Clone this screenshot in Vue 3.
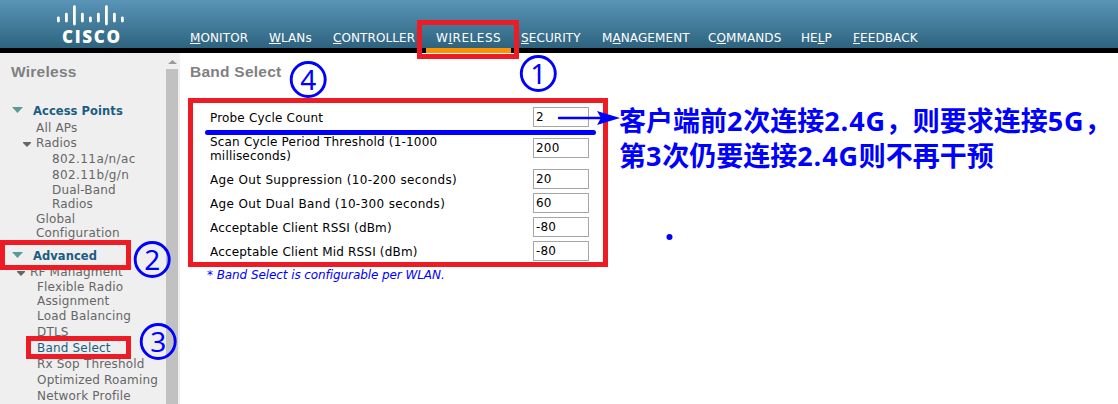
<script setup>
const nav = [
  ['', 'M', 'ONITOR', 59], ['', 'W', 'LANs', 44], ['', 'C', 'ONTROLLER', 83], ['W', 'I', 'RELESS', 65],
  ['', 'S', 'ECURITY', 61], ['M', 'A', 'NAGEMENT', 86], ['C', 'O', 'MMANDS', 73], ['HE', 'L', 'P', 32], ['', 'F', 'EEDBACK', 65],
].map(([before, key, after, width]) => ({ before, key, after, width }))

const menu = [
  { text: 'Access Points', kind: 'head', h: 17, x: 33 },
  { text: 'All APs', h: 15, x: 36 },
  { text: 'Radios', kind: 'sub', h: 16, x: 36 },
  { text: '802.11a/n/ac', kind: 'radio', h: 16, x: 52 },
  { text: '802.11b/g/n', kind: 'radio', h: 15, x: 52 },
  { text: 'Dual-Band', h: 14, x: 52 },
  { text: 'Radios', h: 15, x: 52 },
  { text: 'Global', h: 14, x: 36 },
  { text: 'Configuration', h: 23, x: 36 },
  { text: 'Advanced', kind: 'head', h: 16, x: 33 },
  { text: 'RF Managment', kind: 'sub', h: 15, x: 30 },
  { text: 'Flexible Radio', h: 14, x: 37 },
  { text: 'Assignment', h: 15, x: 37 },
  { text: 'Load Balancing', h: 16, x: 37 },
  { text: 'DTLS', h: 16, x: 37 },
  { text: 'Band Select', kind: 'active', h: 16, x: 37 },
  { text: 'Rx Sop Threshold', h: 16, x: 37 },
  { text: 'Optimized Roaming', h: 16, x: 37 },
  { text: 'Network Profile', h: 16, x: 37 },
]

const fields = [
  { label: 'Probe Cycle Count', value: '2' },
  { label: 'Scan Cycle Period Threshold (1-1000 milliseconds)', value: '200', tall: true },
  { label: 'Age Out Suppression (10-200 seconds)', value: '20', wide: true },
  { label: 'Age Out Dual Band (10-300 seconds)', value: '60', wide: true },
  { label: 'Acceptable Client RSSI (dBm)', value: '-80' },
  { label: 'Acceptable Client Mid RSSI (dBm)', value: '-80' },
]

const bars = [
  [58.4, 16.5, 22.5], [66.4, 12.7, 22.5], [74.4, 5.2, 25.5], [82.4, 12.7, 22.5], [90.4, 16.5, 22.5],
  [98.4, 12.7, 22.5], [106.4, 5.2, 25.5], [114.4, 12.7, 22.5], [122.4, 16.5, 22.5],
]
const steps = [
  { n: 1, x: 538.3, y: 73.5 }, { n: 2, x: 152.2, y: 259.5 },
  { n: 3, x: 158.2, y: 341.5 }, { n: 4, x: 308.2, y: 79.5 },
]
</script>

<template>
  <div class="page">
    <header class="top">
      <svg class="logo" width="190" height="48" viewBox="0 0 190 48">
        <line v-for="b in bars" :key="b[0]" :x1="b[0]" :x2="b[0]" :y1="b[1] + 1.4" :y2="b[2] - 1.4" />
        <text x="62" y="43" textLength="58" lengthAdjust="spacing">CISCO</text>
      </svg>
      <nav class="nav">
        <a v-for="n in nav" :key="n.after" :style="{ width: n.width + 'px' }">{{ n.before }}<u>{{ n.key }}</u>{{ n.after }}</a>
      </nav>
    </header>
    <div class="strip"><i class="tab"></i></div>
    <div class="body">
      <aside class="side">
        <div class="menu">
          <h2>Wireless</h2>
          <div v-for="(m, i) in menu" :key="i" class="item" :class="m.kind" :style="{ height: m.h + 'px', paddingLeft: m.x + 'px' }">
            <svg v-if="m.kind === 'head'" class="tri" width="11" height="6"><path d="M0 0H11L5.5 6Z" /></svg>
            <svg v-if="m.kind === 'sub'" class="tri" width="8" height="5"><path d="M0 0H8V1L4 5L0 1Z" /></svg>
            <span>{{ m.text }}</span>
          </div>
        </div>
        <div class="scroll">
          <svg width="9" height="4"><path d="M0 4L4.5 0L9 4Z" fill="#9b9b9b" /></svg>
          <div class="thumb"></div>
        </div>
      </aside>
      <main class="main">
        <h2>Band Select</h2>
        <div class="form">
          <div v-for="f in fields" :key="f.label" class="row" :class="{ tall: f.tall, wide: f.wide }">
            <label>{{ f.label }}</label>
            <span class="box">{{ f.value }}</span>
          </div>
        </div>
        <p class="note">* Band Select is configurable per WLAN.</p>
      </main>
    </div>

    <svg class="marks" width="1118" height="404" viewBox="0 0 1118 404">
      <g fill="none" stroke="#ed1c24" stroke-width="5">
        <rect x="419.5" y="22.5" width="97" height="34" />
        <rect x="190.5" y="100.5" width="415" height="164" />
        <rect x="2.5" y="242.5" width="126" height="25" />
        <rect x="28.5" y="338.5" width="100" height="18" />
      </g>
      <path d="M207.5 132.5H593.5" stroke="#00f" stroke-width="5" stroke-linecap="round" />
      <path d="M559 118H602" stroke="#00f" stroke-width="2.4" stroke-linecap="round" />
      <path d="M597 111L620 118L597 125L601 118Z" fill="#00f" />
      <circle cx="669.5" cy="237" r="3" fill="#00f" />
      <g v-for="s in steps" :key="s.n">
        <circle :cx="s.x" :cy="s.y" r="17" fill="none" stroke="#00f" stroke-width="2.9" />
        <text class="digit" :x="s.x" :y="s.y + 10.5" text-anchor="middle">{{ s.n }}</text>
      </g>
    </svg>
    <div class="remark">
      <div>客户端前<b>2</b>次连接<b>2.4G</b>，则要求连接<b>5G</b>，</div>
      <div>第<b>3</b>次仍要连接<b>2.4G</b>则不再干预</div>
    </div>
  </div>
</template>

<style>
body { background: #fff; overflow: hidden; }
</style>
<style scoped>
.page { position: relative; width: 1118px; height: 404px; overflow: hidden; font-family: "DejaVu Sans", sans-serif; font-size: 12px; letter-spacing: 0.18px; }
.top { height: 48px; display: flex; background: linear-gradient(#5a95b7, #2d637f); }
.logo { flex: none; letter-spacing: 0; }
.logo line { stroke: #fff; stroke-width: 2.8; stroke-linecap: round; }
.logo text { fill: #fff; font: 800 17px "Open Sans", sans-serif; }
.nav { display: flex; gap: 20px; padding-top: 30px; color: #fff; font-size: 12px; line-height: 16px; letter-spacing: 0.1px; }
.nav a { white-space: nowrap; }
.nav a:nth-child(4) { letter-spacing: 0.55px; }
.nav u { text-underline-offset: 1px; text-decoration-thickness: 1px; }
.strip { height: 5px; background: #000; }
.tab { display: block; width: 85px; height: 5px; margin-left: 426px; background: #ff9000; }
.body { display: flex; height: 351px; }
.side { width: 180px; background: #efefef; display: flex; overflow: hidden; }
.menu { width: 166px; flex: none; }
h2 { margin: 0; font: bold 15.5px/20px "Liberation Sans", Arial, sans-serif; letter-spacing: 0.25px; color: #808080; }
.menu h2 { padding: 9px 0 0 11px; height: 22px; }
.item { box-sizing: border-box; position: relative; color: #666; line-height: 14px; white-space: nowrap; }
.menu h2 + .item { margin-top: 20px; }
.head { color: #1b5c82; font-weight: bold; font-size: 11.5px; letter-spacing: 0.08px; }
.radio { letter-spacing: 0.4px; }
.active { color: #1b5c82; }
.tri { position: absolute; left: 12px; top: 3px; fill: #5c9a98; }
.sub .tri { left: auto; margin-left: -13px; top: 6px; fill: #666; }
.scroll { width: 12px; display: flex; flex-direction: column; align-items: center; padding-top: 7px; }
.scroll svg { flex: none; }
.thumb { width: 12px; flex: 1; margin-top: 5px; background: #c1c1c1; }
.main { flex: 1; }
.main h2 { padding: 9px 0 0 10px; }
.form { padding: 23px 0 0 30px; color: #000; }
.row { display: flex; align-items: center; height: 24px; }
.row.tall { height: 38px; }
.row label { width: 323px; line-height: 14px; padding: 2px 70px 0 0; box-sizing: border-box; }
.row.wide label { letter-spacing: 0.35px; }
.box { box-sizing: border-box; width: 56px; height: 20px; border: 1px solid #a6a6a6; padding-left: 2px; line-height: 19px; background: #fff; }
.note { margin: 5px 0 0 27px; font-style: italic; color: #00f; line-height: 14px; letter-spacing: -0.08px; }
.marks { position: absolute; left: 0; top: 0; letter-spacing: 0; }
.digit { fill: #00f; font: 28px "Noto Sans", sans-serif; }
.remark { position: absolute; left: 619px; top: 103px; color: #00f; font: bold 27px/34px "Noto Sans CJK SC", sans-serif; letter-spacing: 0; white-space: nowrap; }
.remark b { font-family: "Open Sans", sans-serif; font-weight: 700; letter-spacing: 0.85px; }
</style>
